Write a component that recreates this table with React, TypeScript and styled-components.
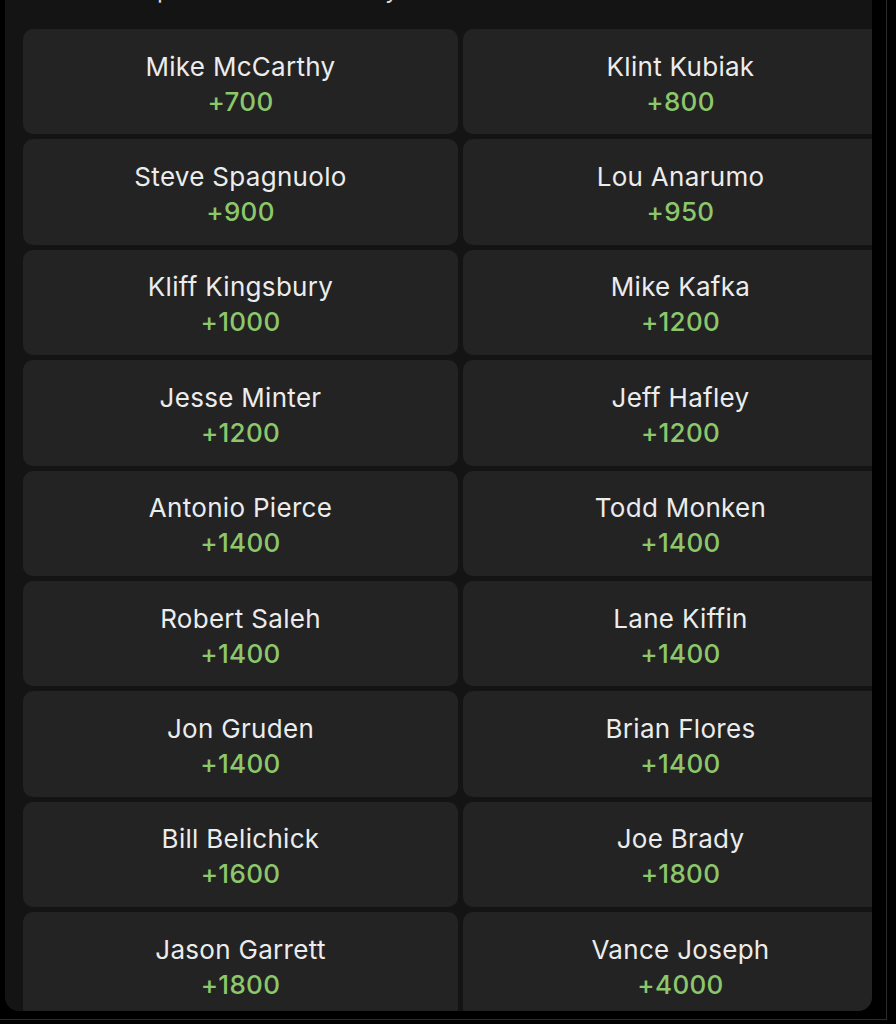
import React from "react"
import styled, { createGlobalStyle } from "styled-components"

interface Candidate {
  name: string
  odds: string
}

const candidates: Candidate[] = [
  { name: "Mike McCarthy", odds: "+700" },
  { name: "Klint Kubiak", odds: "+800" },
  { name: "Steve Spagnuolo", odds: "+900" },
  { name: "Lou Anarumo", odds: "+950" },
  { name: "Kliff Kingsbury", odds: "+1000" },
  { name: "Mike Kafka", odds: "+1200" },
  { name: "Jesse Minter", odds: "+1200" },
  { name: "Jeff Hafley", odds: "+1200" },
  { name: "Antonio Pierce", odds: "+1400" },
  { name: "Todd Monken", odds: "+1400" },
  { name: "Robert Saleh", odds: "+1400" },
  { name: "Lane Kiffin", odds: "+1400" },
  { name: "Jon Gruden", odds: "+1400" },
  { name: "Brian Flores", odds: "+1400" },
  { name: "Bill Belichick", odds: "+1600" },
  { name: "Joe Brady", odds: "+1800" },
  { name: "Jason Garrett", odds: "+1800" },
  { name: "Vance Joseph", odds: "+4000" },
]

const GlobalStyle = createGlobalStyle`
  html, body {
    margin: 0;
    padding: 0;
    background: #000;
    font-family: Inter, "Noto Sans", sans-serif;
  }
`

export default function App() {
  return (
    <>
      <GlobalStyle />
      <S.Frame>
        <S.Panel>
          {/* title is scrolled mostly out of view, only descenders peek in */}
          <S.Heading>Top NFL coach odds by team</S.Heading>
          <S.Grid>
            {candidates.map((c, key) => (
              <S.Card key={key}>
                <S.Name>{c.name}</S.Name>
                <S.Odds>{c.odds}</S.Odds>
              </S.Card>
            ))}
          </S.Grid>
        </S.Panel>
      </S.Frame>
    </>
  )
}

const S = {
  Frame: styled.div`
    box-sizing: border-box;
    width: 887px;
    height: 1020px;
    padding: 0 14px 8px 5px;
    border-right: 1px solid #2c2c2c;
    border-bottom: 1px solid #2c2c2c;
  `,
  Panel: styled.div`
    width: 867px;
    height: 1011px;
    background: #141414;
    border-radius: 0 0 14px 14px;
    overflow: hidden;
  `,
  Heading: styled.div`
    margin-top: -24px;
    height: 53px;
    padding-left: 124px;
    color: #d8d8d8;
    font-size: 24px;
    line-height: 28px;
    white-space: nowrap;
  `,
  Grid: styled.div`
    display: grid;
    grid-template-columns: 435px 435px;
    grid-auto-rows: 105.4px;
    gap: 5px;
    padding-left: 18px;
  `,
  Card: styled.div`
    display: flex;
    flex-direction: column;
    align-items: center;
    justify-content: center;
    padding-top: 4px;
    box-sizing: border-box;
    background: #232323;
    border-radius: 10px;
  `,
  Name: styled.div`
    color: #ececec;
    font-size: 26px;
    line-height: 35px;
    letter-spacing: 0.3px;
    font-weight: 400;
  `,
  Odds: styled.div`
    color: #8cc86b;
    font-size: 26px;
    line-height: 35px;
    letter-spacing: 0.3px;
    font-weight: 500;
  `,
}
